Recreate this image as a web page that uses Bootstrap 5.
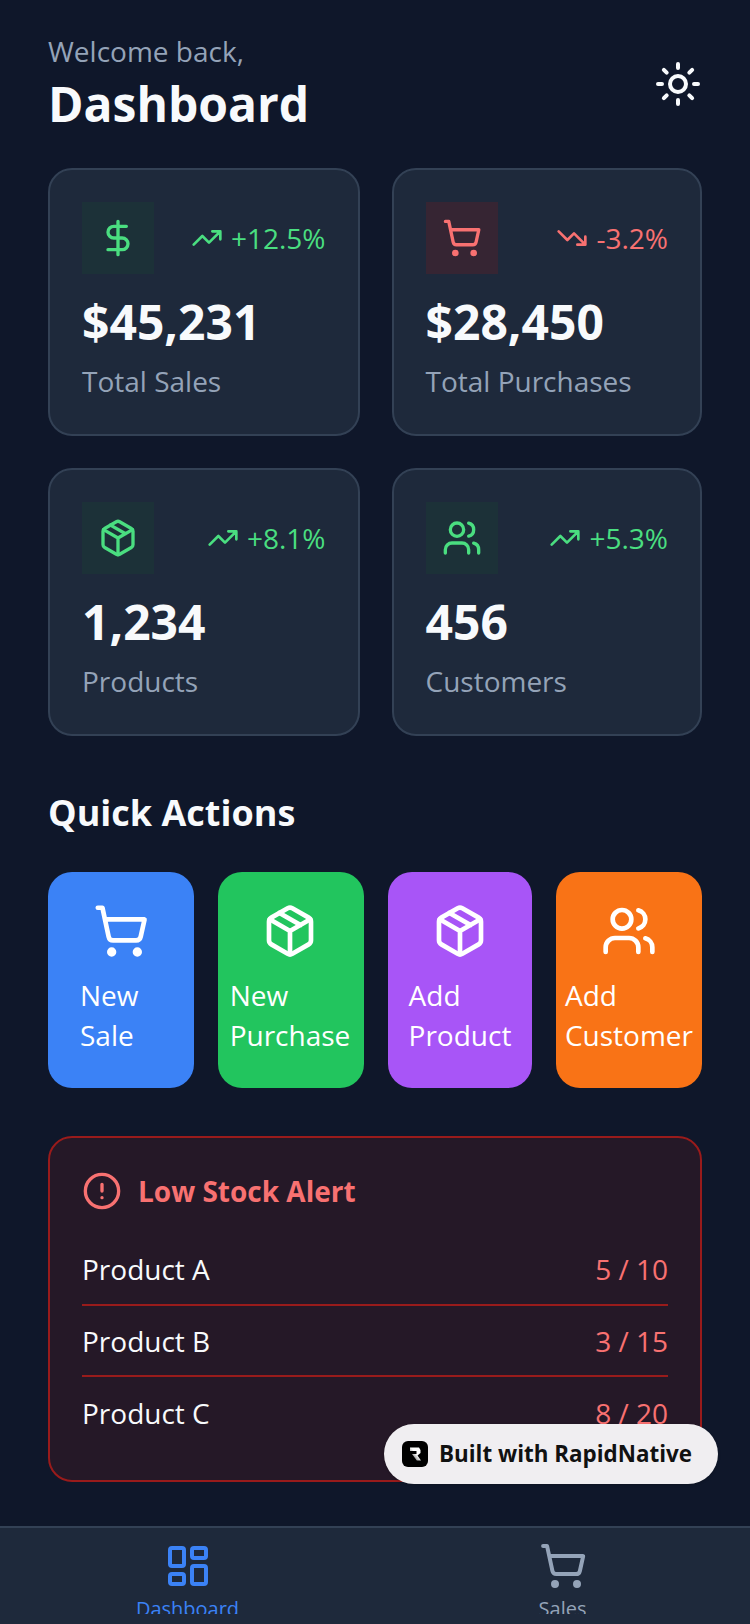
<!DOCTYPE html>
<html lang="en">
<head>
  <meta charset="UTF-8">
  <title>Dashboard</title>
  <link href="https://cdn.jsdelivr.net/npm/bootstrap@5.3.3/dist/css/bootstrap.min.css" rel="stylesheet">
  <style>
    html, body { height: 1624px; overflow: hidden; }
    body { background: #0f172a; color: #f8fafc; font-family: "Open Sans", sans-serif; }
    svg { display: block; fill: none; stroke: currentColor; stroke-linecap: round; stroke-linejoin: round; }
    .app-shell { position: relative; height: 1624px; overflow: hidden; }
    .page-head { padding: 31px 48px 0 48px; height: 168px; }
    .welcome { font-size: 28px; line-height: 40px; color: #94a3b8; }
    .page-title { font-size: 48px; line-height: 66px; font-weight: 700; margin: 0; }
    .theme-icon { margin-top: 29px; }
    .stat-grid { display: grid; grid-template-columns: 311.5px 310.5px; gap: 32px; padding: 0 48px; }
    .stat-box { height: 268px; background: #1e293b; border: 2px solid #334155; border-radius: 24px; padding: 32px; }
    .stat-icon { width: 72px; height: 72px; display: flex; align-items: center; justify-content: center; }
    .tone-up { background: rgba(20,83,45,.2); color: #4ade80; }
    .tone-down { background: rgba(127,29,29,.25); color: #f87171; }
    .trend { font-size: 28px; line-height: 36px; gap: 8px; }
    .trend-up { color: #4ade80; }
    .trend-down { color: #f87171; }
    .stat-value { font-size: 48px; line-height: 56px; font-weight: 700; margin-top: 20px; }
    .stat-label { font-size: 28px; line-height: 40px; color: #94a3b8; margin-top: 11px; }
    .section-title { font-size: 36px; line-height: 44px; font-weight: 700; margin: 55px 48px 37px; }
    .action-row { display: grid; grid-template-columns: 146px 146px 144px 146px; gap: 24px; padding: 0 48px; }
    .action-btn { height: 216px; border-radius: 24px; padding-top: 31px; display: flex; flex-direction: column; align-items: center; color: #fff; font-size: 28px; line-height: 40px; }
    .action-label { display: block; margin-top: 16px; min-width: 82px; white-space: nowrap; }
    .bg-sale { background: #3b82f6; }
    .bg-purchase { background: #22c55e; padding-right: 2px; }
    .bg-product { background: #a855f7; }
    .bg-customer { background: #f97316; }
    .alert-box { margin: 48px 48px 0; height: 346px; background: rgba(127,29,29,.2); border: 2px solid #991b1b; border-radius: 24px; padding: 32px; }
    .alert-title { font-size: 28px; line-height: 42px; font-weight: 700; color: #f87171; gap: 16px; margin-bottom: 22px; }
    .alert-item { height: 71.7px; font-size: 28px; border-bottom: 2px solid #991b1b; }
    .alert-item:last-child { border-bottom: 0; }
    .alert-count { color: #f87171; }
    .tab-bar { position: absolute; left: 0; right: 0; top: 1526px; height: 98px; background: #1e293b; border-top: 2px solid #334155; display: flex; }
    .tab-item { flex: 1 1 0; display: flex; flex-direction: column; align-items: center; padding-top: 14px; color: #94a3b8; font-size: 20px; line-height: 28px; }
    .tab-item.active { color: #3b82f6; }
    .tab-label { display: block; height: 19px; margin-top: 5px; overflow: hidden; }
    .built-badge { position: absolute; left: 384px; top: 1424px; width: 334px; height: 60px; padding-left: 18px; background: #f0eef1; color: #111; border-radius: 30px; font-size: 22.4px; font-weight: 700; gap: 11px; box-shadow: 0 1px 3px rgba(0,0,0,.2); }
  </style>
</head>
<body>
<div class="app-shell">
  <header class="page-head d-flex justify-content-between align-items-start">
    <div>
      <div class="welcome">Welcome back,</div>
      <h1 class="page-title">Dashboard</h1>
    </div>
    <svg class="theme-icon" width="48" height="48" viewBox="0 0 24 24" stroke-width="2"><circle cx="12" cy="12" r="4"/><path d="M12 2v2M12 20v2M4.93 4.93l1.41 1.41M17.66 17.66l1.41 1.41M2 12h2M20 12h2M6.34 17.66l-1.41 1.41M19.07 4.93l-1.41 1.41"/></svg>
  </header>

  <div class="stat-grid">
    <div class="stat-box">
      <div class="d-flex justify-content-between align-items-center">
        <div class="stat-icon tone-up"><svg width="40" height="40" viewBox="0 0 24 24" stroke-width="2"><path d="M12 2v20M17 5H9.5a3.5 3.5 0 0 0 0 7h5a3.5 3.5 0 0 1 0 7H6"/></svg></div>
        <div class="trend trend-up d-flex align-items-center"><svg width="32" height="32" viewBox="0 0 24 24" stroke-width="2"><path d="M22 7l-8.5 8.5-5-5L2 17M16 7h6v6"/></svg>+12.5%</div>
      </div>
      <div class="stat-value">$45,231</div>
      <div class="stat-label">Total Sales</div>
    </div>
    <div class="stat-box">
      <div class="d-flex justify-content-between align-items-center">
        <div class="stat-icon tone-down"><svg width="40" height="40" viewBox="0 0 24 24" stroke-width="2"><circle cx="8" cy="21" r="1"/><circle cx="19" cy="21" r="1"/><path d="M2.05 2.05h2l2.66 12.42a2 2 0 0 0 2 1.58h9.78a2 2 0 0 0 1.95-1.57l1.65-7.43H5.12"/></svg></div>
        <div class="trend trend-down d-flex align-items-center"><svg width="32" height="32" viewBox="0 0 24 24" stroke-width="2"><path d="M22 17l-8.5-8.5-5 5L2 7M16 17h6v-6"/></svg>-3.2%</div>
      </div>
      <div class="stat-value">$28,450</div>
      <div class="stat-label">Total Purchases</div>
    </div>
    <div class="stat-box">
      <div class="d-flex justify-content-between align-items-center">
        <div class="stat-icon tone-up"><svg width="40" height="40" viewBox="0 0 24 24" stroke-width="2"><path d="M21 8a2 2 0 0 0-1-1.73l-7-4a2 2 0 0 0-2 0l-7 4A2 2 0 0 0 3 8v8a2 2 0 0 0 1 1.73l7 4a2 2 0 0 0 2 0l7-4A2 2 0 0 0 21 16Z"/><path d="M3.3 7 12 12l8.7-5M12 22V12M7.5 4.27l9 5.15"/></svg></div>
        <div class="trend trend-up d-flex align-items-center"><svg width="32" height="32" viewBox="0 0 24 24" stroke-width="2"><path d="M22 7l-8.5 8.5-5-5L2 17M16 7h6v6"/></svg>+8.1%</div>
      </div>
      <div class="stat-value">1,234</div>
      <div class="stat-label">Products</div>
    </div>
    <div class="stat-box">
      <div class="d-flex justify-content-between align-items-center">
        <div class="stat-icon tone-up"><svg width="40" height="40" viewBox="0 0 24 24" stroke-width="2"><path d="M16 21v-2a4 4 0 0 0-4-4H6a4 4 0 0 0-4 4v2"/><circle cx="9" cy="7" r="4"/><path d="M22 21v-2a4 4 0 0 0-3-3.87M16 3.13a4 4 0 0 1 0 7.75"/></svg></div>
        <div class="trend trend-up d-flex align-items-center"><svg width="32" height="32" viewBox="0 0 24 24" stroke-width="2"><path d="M22 7l-8.5 8.5-5-5L2 17M16 7h6v6"/></svg>+5.3%</div>
      </div>
      <div class="stat-value">456</div>
      <div class="stat-label">Customers</div>
    </div>
  </div>

  <h2 class="section-title">Quick Actions</h2>
  <div class="action-row">
    <div class="action-btn bg-sale"><svg width="56" height="56" viewBox="0 0 24 24" stroke-width="2"><circle cx="8" cy="21" r="1"/><circle cx="19" cy="21" r="1"/><path d="M2.05 2.05h2l2.66 12.42a2 2 0 0 0 2 1.58h9.78a2 2 0 0 0 1.95-1.57l1.65-7.43H5.12"/></svg><span class="action-label">New<br>Sale</span></div>
    <div class="action-btn bg-purchase"><svg width="56" height="56" viewBox="0 0 24 24" stroke-width="2"><path d="M21 8a2 2 0 0 0-1-1.73l-7-4a2 2 0 0 0-2 0l-7 4A2 2 0 0 0 3 8v8a2 2 0 0 0 1 1.73l7 4a2 2 0 0 0 2 0l7-4A2 2 0 0 0 21 16Z"/><path d="M3.3 7 12 12l8.7-5M12 22V12M7.5 4.27l9 5.15"/></svg><span class="action-label">New<br>Purchase</span></div>
    <div class="action-btn bg-product"><svg width="56" height="56" viewBox="0 0 24 24" stroke-width="2"><path d="M21 8a2 2 0 0 0-1-1.73l-7-4a2 2 0 0 0-2 0l-7 4A2 2 0 0 0 3 8v8a2 2 0 0 0 1 1.73l7 4a2 2 0 0 0 2 0l7-4A2 2 0 0 0 21 16Z"/><path d="M3.3 7 12 12l8.7-5M12 22V12M7.5 4.27l9 5.15"/></svg><span class="action-label">Add<br>Product</span></div>
    <div class="action-btn bg-customer"><svg width="56" height="56" viewBox="0 0 24 24" stroke-width="2"><path d="M16 21v-2a4 4 0 0 0-4-4H6a4 4 0 0 0-4 4v2"/><circle cx="9" cy="7" r="4"/><path d="M22 21v-2a4 4 0 0 0-3-3.87M16 3.13a4 4 0 0 1 0 7.75"/></svg><span class="action-label">Add<br>Customer</span></div>
  </div>

  <div class="alert-box">
    <div class="alert-title d-flex align-items-center"><svg width="40" height="40" viewBox="0 0 24 24" stroke-width="2"><circle cx="12" cy="12" r="10"/><path d="M12 8v4M12 16h.01"/></svg>Low Stock Alert</div>
    <div class="alert-item d-flex justify-content-between align-items-center"><span>Product A</span><span class="alert-count">5 / 10</span></div>
    <div class="alert-item d-flex justify-content-between align-items-center"><span>Product B</span><span class="alert-count">3 / 15</span></div>
    <div class="alert-item d-flex justify-content-between align-items-center"><span>Product C</span><span class="alert-count">8 / 20</span></div>
  </div>

  <div class="built-badge d-flex align-items-center">
    <svg width="26" height="26" viewBox="0 0 26 26"><defs><linearGradient id="logoFade" x1="0" y1="1" x2="1" y2="0"><stop offset="0" stop-color="#222"/><stop offset=".55" stop-color="#fff"/></linearGradient></defs><rect width="26" height="26" rx="6" fill="#000" stroke="none"/><path d="M8 6.5h9l1.5 2.5v3l-3 2.5 3.5 5h-4.2L10 13h4.5V10H8z" fill="url(#logoFade)" stroke="none"/></svg>
    Built with RapidNative
  </div>

  <nav class="tab-bar">
    <div class="tab-item active"><svg width="48" height="48" viewBox="0 0 24 24" stroke-width="2"><rect x="3" y="3" width="7" height="9" rx="1"/><rect x="14" y="3" width="7" height="5" rx="1"/><rect x="14" y="12" width="7" height="9" rx="1"/><rect x="3" y="16" width="7" height="5" rx="1"/></svg><span class="tab-label">Dashboard</span></div>
    <div class="tab-item"><svg width="48" height="48" viewBox="0 0 24 24" stroke-width="2"><circle cx="8" cy="21" r="1"/><circle cx="19" cy="21" r="1"/><path d="M2.05 2.05h2l2.66 12.42a2 2 0 0 0 2 1.58h9.78a2 2 0 0 0 1.95-1.57l1.65-7.43H5.12"/></svg><span class="tab-label">Sales</span></div>
  </nav>
</div>
<script src="https://cdn.jsdelivr.net/npm/bootstrap@5.3.3/dist/js/bootstrap.bundle.min.js"></script>
</body>
</html>
